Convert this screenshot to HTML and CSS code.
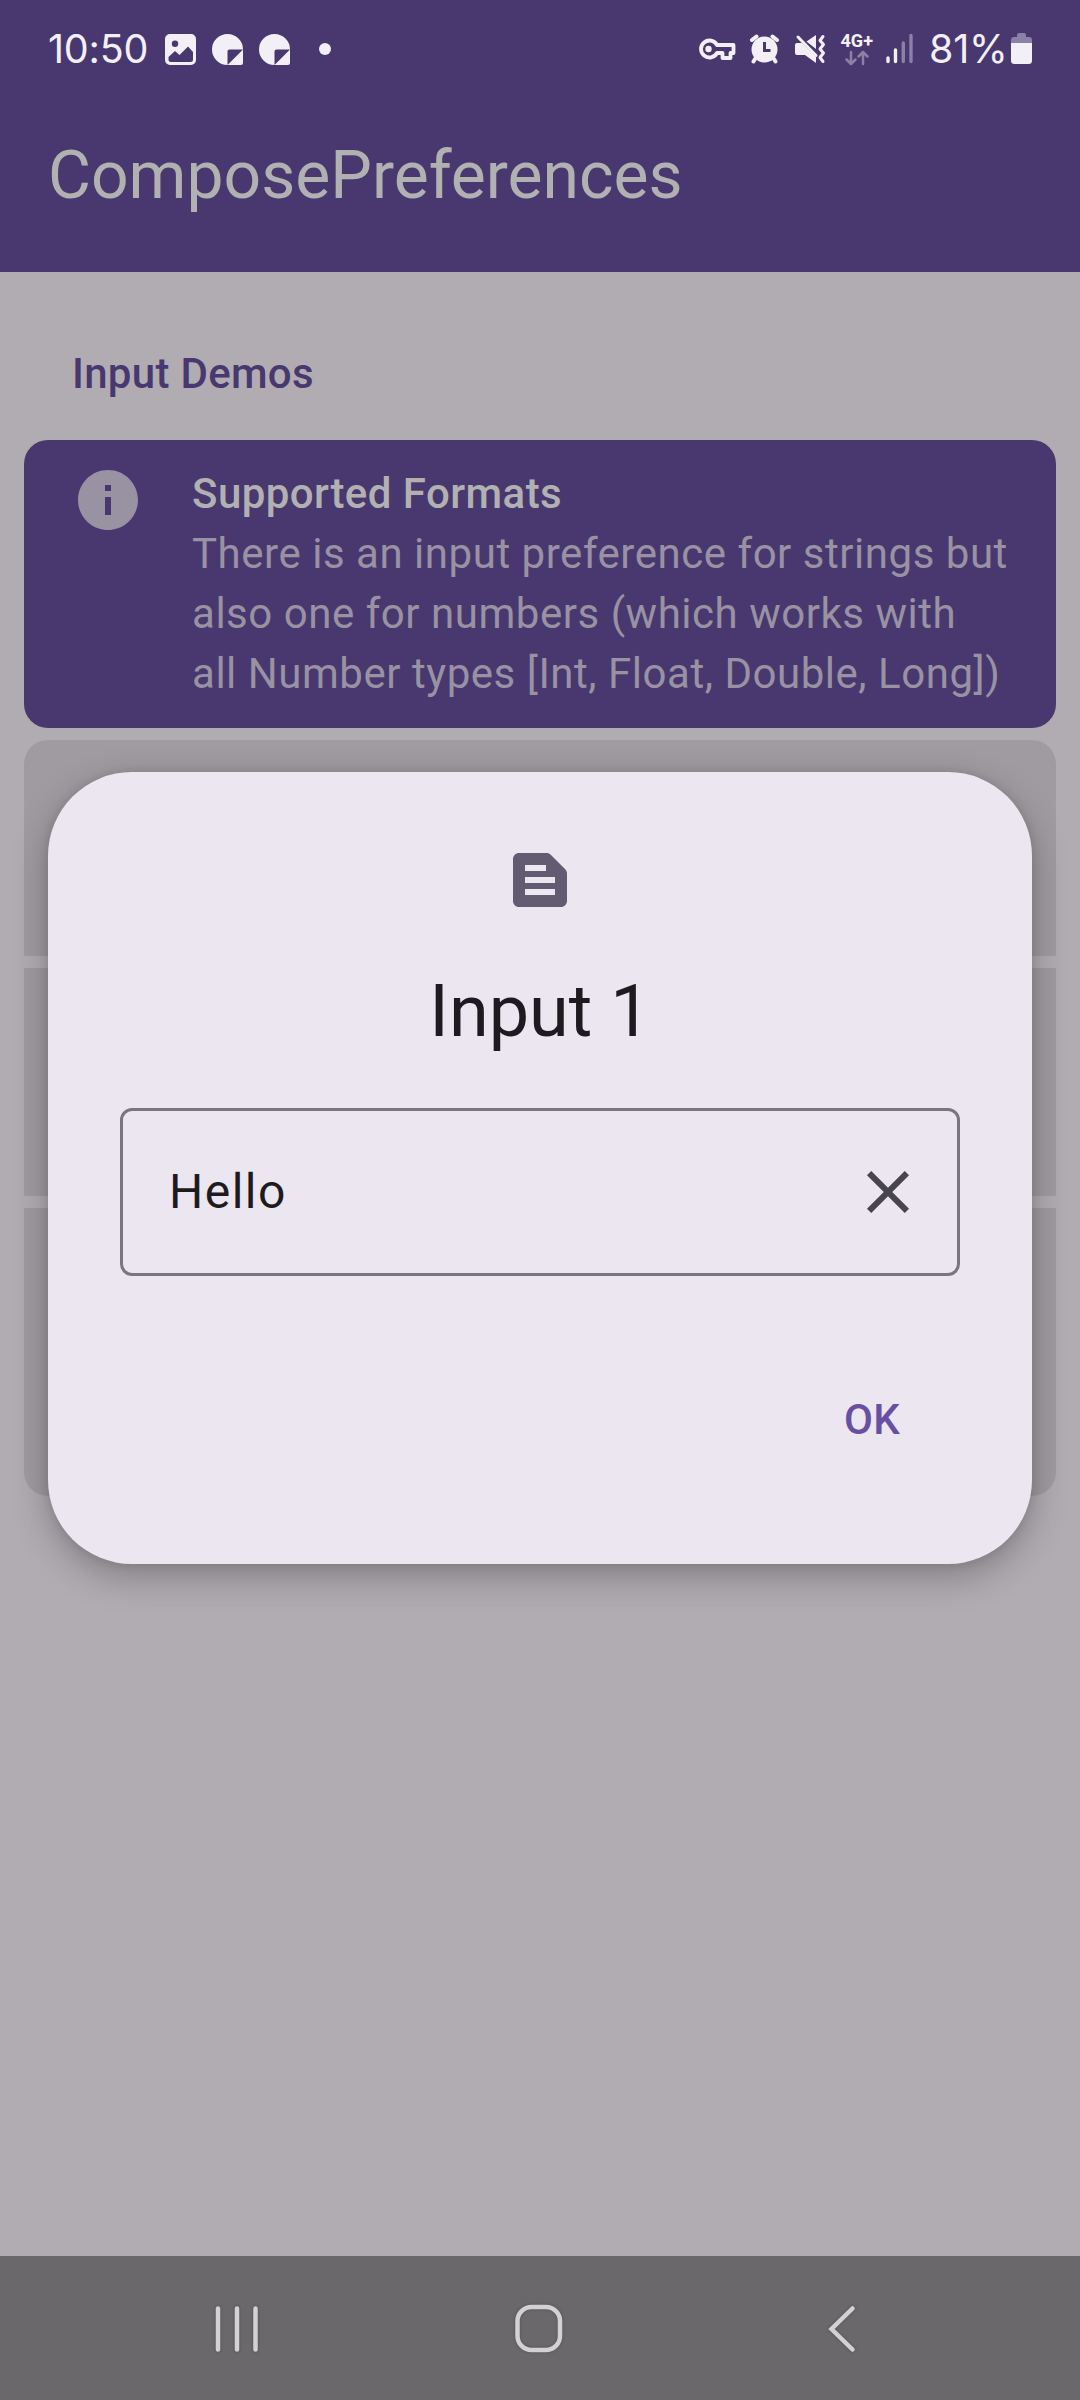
FILE: index.html
```html
<!DOCTYPE html>
<html lang="en">
<head>
<meta charset="utf-8">
<title>ComposePreferences</title>
<link rel="stylesheet" href="styles.css">
</head>
<body>
<div class="screen">
  <header class="top">
    <div class="status">
      <div class="status-group">
        <span class="clock">10:50</span>
        <svg class="s-image" width="32" height="38" viewBox="0 0 32 38"><path fill-rule="evenodd" d="M5 4H26A5 5 0 0 1 31 9V30A5 5 0 0 1 26 35H5A5 5 0 0 1 0 30V9A5 5 0 0 1 5 4ZM10 10.500A3.200 3.200 0 1 0 10 16.900A3.200 3.200 0 1 0 10 10.500ZM3.500 27 10 21 14.500 25 23 16.500 28 22V29.500Q28 32 25.500 32H6Q3.500 32 3.500 29.500Z"/></svg>
        <svg class="s-sticker" width="32" height="38" viewBox="0 0 32 38"><path fill-rule="evenodd" d="M31 19.500V33Q31 35 29 35H15.500A15.500 15.500 0 1 1 31 19.500ZM15.500 35 31 19.500H17.500Q15.500 19.500 15.500 21.500Z"/></svg>
        <svg class="s-sticker" width="32" height="38" viewBox="0 0 32 38"><path fill-rule="evenodd" d="M31 19.500V33Q31 35 29 35H15.500A15.500 15.500 0 1 1 31 19.500ZM15.500 35 31 19.500H17.500Q15.500 19.500 15.500 21.500Z"/></svg>
        <span class="dot"></span>
      </div>
      <div class="status-group">
        <svg width="38" height="38" viewBox="698 30 38 38"><path class="line" stroke-width="3.800" stroke-linejoin="round" d="M717 45H733.500V53H730.500V58H722.500V53H717A8.500 8.500 0 1 1 717 45Z"/><circle cx="708.500" cy="49" r="3.200"/></svg>
        <svg class="s-alarm" width="30" height="38" viewBox="750 30 30 38"><circle cx="764.500" cy="49.500" r="13"/><path class="line" stroke-width="4" stroke-linecap="round" d="M752 40 756.500 36.500M777 40 772.500 36.500M755 59 753.500 61.500M774 59 775.500 61.500"/><path class="cut" stroke-width="3" d="M764.500 42V50.500H770.500"/></svg>
        <svg class="s-mute" width="32" height="38" viewBox="794 30 32 38"><path d="M816 35V49L806.500 41.500ZM797 43H802L816 57V63L805 55H797Q795 55 795 53V45Q795 43 797 43Z"/><path class="line" stroke-width="3" stroke-linecap="round" d="M798 37 816 55.500"/><path class="line" stroke-width="3" stroke-linecap="round" stroke-linejoin="round" d="M823 36.500 820 40.500 823.500 44.500 820 49 823.500 53 820 57.500 823 61.500"/></svg>
        <svg class="s-net" width="36" height="38" viewBox="840 30 36 38"><text class="net" x="840.500" y="46.800" textLength="32.500" lengthAdjust="spacingAndGlyphs">4G+</text><path class="line dim" stroke-width="2.500" stroke-linecap="round" stroke-linejoin="round" d="M851 52V64M846.500 59.500 851 64 855.500 59.500M863 64V52M858.500 56.500 863 52 867.500 56.500"/></svg>
        <svg class="s-signal" width="28" height="38" viewBox="886 30 28 38"><path class="line" stroke-width="3.400" stroke-linecap="round" d="M888 58V61.500M895.500 50V61.500"/><path class="line dim" stroke-width="3.400" stroke-linecap="round" d="M903.300 43V61.500M911 35.500V61.500"/></svg>
        <span class="percent">81%</span>
        <svg class="s-battery" width="22" height="38" viewBox="1011 30 22 38"><path class="dimfill" d="M1011 43V40Q1011 37 1014 37H1017V35Q1017 33 1019 33H1024Q1026 33 1026 35V37H1029Q1032 37 1032 40V43Z"/><path d="M1011 43H1032V60.500Q1032 64 1028.500 64H1014.500Q1011 64 1011 60.500Z"/></svg>
      </div>
    </div>
    <h1 class="title">ComposePreferences</h1>
  </header>

  <main class="content">
    <h2 class="section">Input Demos</h2>
    <div class="group">
      <section class="card info">
        <svg class="icon" viewBox="0 0 24 24"><path d="M12 2C6.480 2 2 6.480 2 12s4.480 10 10 10 10-4.480 10-10S17.520 2 12 2zm1 15h-2v-6h2v6zm0-8h-2V7h2v2z"/></svg>
        <div class="info-body">
          <h3>Supported Formats</h3>
          <p>There is an input preference for strings but also one for numbers (which works with <br>all Number types [Int, Float, Double, Long])</p>
        </div>
      </section>
      <section class="card pref pref-first"></section>
      <section class="card pref pref-mid"></section>
      <section class="card pref pref-last"></section>
    </div>
  </main>

  <nav class="nav">
    <svg viewBox="0 0 60 60"><path d="M11 9.500V50.500M30 9.500V50.500M48.500 9.500V50.500"/></svg>
    <svg viewBox="0 0 60 60"><rect x="8.500" y="8" width="42.500" height="43" rx="14"/></svg>
    <svg viewBox="0 0 60 60"><path d="M41.500 9.500 20.500 30 41.500 50.500"/></svg>
  </nav>

  <div class="dialog" role="dialog">
    <svg class="icon dialog-icon" viewBox="0 0 24 24"><path d="M20.410 8.410l-4.830-4.830C15.210 3.210 14.700 3 14.170 3H5C3.900 3 3 3.900 3 5v14c0 1.100.9 2 2 2h14c1.100 0 2-.9 2-2V9.830C21 9.300 20.790 8.790 20.410 8.410zM7 7h7v2H7V7zM17 17H7v-2h10V17zM17 13H7v-2h10V13z"/></svg>
    <h2 class="dialog-title">Input 1</h2>
    <div class="field">
      <span>Hello</span>
      <svg class="icon" viewBox="0 0 24 24"><path d="M19 6.410 17.590 5 12 10.590 6.410 5 5 6.410 10.590 12 5 17.590 6.410 19 12 13.410 17.590 19 19 17.590 13.410 12z"/></svg>
    </div>
    <div class="actions"><button class="ok">OK</button></div>
  </div>
</div>
</body>
</html>
```
FILE: styles.css
```css
* { box-sizing: border-box; margin: 0; padding: 0; }

body { font-family: Roboto, "Noto Sans", sans-serif; }

.screen {
  position: relative;
  display: flex;
  flex-direction: column;
  width: 1080px;
  height: 2400px;
  overflow: hidden;
  background: #b1acb2;
}

.top { height: 272px; background: #48386f; }

.status {
  display: flex;
  justify-content: space-between;
  height: 98px;
  padding: 0 47px 0 48px;
  color: #f2f0f6;
}
.status-group { display: flex; align-items: center; }
.status svg { display: block; flex: none; fill: #f2f0f6; }
.status .line { fill: none; stroke: #f2f0f6; }
.status .cut { fill: none; stroke: #48386f; }
.status .dim { stroke: #8b80a5; }
.status .dimfill { fill: #8b80a5; }
.clock, .percent {
  font-family: Inter, sans-serif;
  font-size: 39.5px;
  line-height: 98px;
  white-space: nowrap;
}
.clock { width: 117px; letter-spacing: -0.2px; }
.percent { width: 82px; margin-left: 15px; letter-spacing: -0.3px; }
.s-sticker { margin-left: 15px; }
.dot { width: 12px; height: 12px; margin-left: 28px; border-radius: 50%; background: #f2f0f6; }
.s-alarm { margin-left: 14px; }
.s-mute { margin-left: 14px; }
.s-net { margin-left: 14px; }
.s-signal { margin-left: 10px; }
.net { font: 700 18px Roboto, sans-serif; }

.title {
  padding: 39px 48px 0;
  font-size: 66px;
  font-weight: 400;
  line-height: 78px;
  color: #b1b1b1;
}

.content { flex: 1; padding: 72px 24px 0; }
.section {
  height: 96px;
  padding: 0 48px;
  font-size: 42px;
  font-weight: 500;
  line-height: 60px;
  letter-spacing: 0.3px;
  color: #48386f;
}
.group { display: flex; flex-direction: column; gap: 12px; }
.card { background: #a09ba0; }
.icon { display: block; flex: none; width: 72px; height: 72px; }

.info {
  display: flex;
  gap: 48px;
  height: 288px;
  padding: 24px 40px 24px 48px;
  border-radius: 24px;
  background: #48386f;
}
.info .icon { fill: #9892a2; }
.info-body { flex: 1; font-size: 42px; line-height: 60px; }
.info-body h3 { font-size: 42px; font-weight: 500; letter-spacing: 0.45px; color: #b1b1b1; }
.info-body p { letter-spacing: 0.53px; color: #9892a2; }

.pref-first { height: 216px; border-radius: 24px 24px 0 0; }
.pref-mid { height: 228px; }
.pref-last { height: 288px; border-radius: 0 0 24px 24px; }

.nav {
  display: flex;
  justify-content: space-between;
  align-items: center;
  height: 144px;
  padding: 2px 209px 0 207px;
  background: #6b686b;
}
.nav svg {
  width: 60px;
  height: 60px;
  fill: none;
  stroke: #d2d2d2;
  stroke-width: 4.5;
  stroke-linecap: round;
  filter: drop-shadow(0 0 1.5px rgba(0, 0, 0, 0.25));
}

.dialog {
  position: absolute;
  left: 48px;
  top: 772px;
  display: flex;
  flex-direction: column;
  width: 984px;
  height: 792px;
  padding: 72px;
  border-radius: 84px;
  background: #ece6f0;
  box-shadow: 0 12px 36px rgba(0, 0, 0, 0.28), 0 0 10px rgba(0, 0, 0, 0.1);
}
.dialog-icon { align-self: center; fill: #625b71; }
.dialog-title {
  margin-top: 48px;
  font-size: 72px;
  font-weight: 400;
  line-height: 96px;
  text-align: center;
  color: #1d1b20;
}
.field {
  display: flex;
  justify-content: space-between;
  align-items: center;
  height: 168px;
  margin-top: 48px;
  padding: 0 33px 0 46px;
  border: 3px solid #7a7580;
  border-radius: 12px;
  font-size: 48px;
  letter-spacing: 1.5px;
  color: #1d1b20;
}
.field span { padding-bottom: 2px; }
.field .icon { fill: #49454f; }
.actions { display: flex; justify-content: flex-end; margin-top: 84px; padding-right: 24px; }
.ok {
  height: 120px;
  padding: 0 36px;
  border: 0;
  background: none;
  font: 500 42px/60px Roboto, sans-serif;
  letter-spacing: 0.3px;
  color: #6750a4;
}
```
